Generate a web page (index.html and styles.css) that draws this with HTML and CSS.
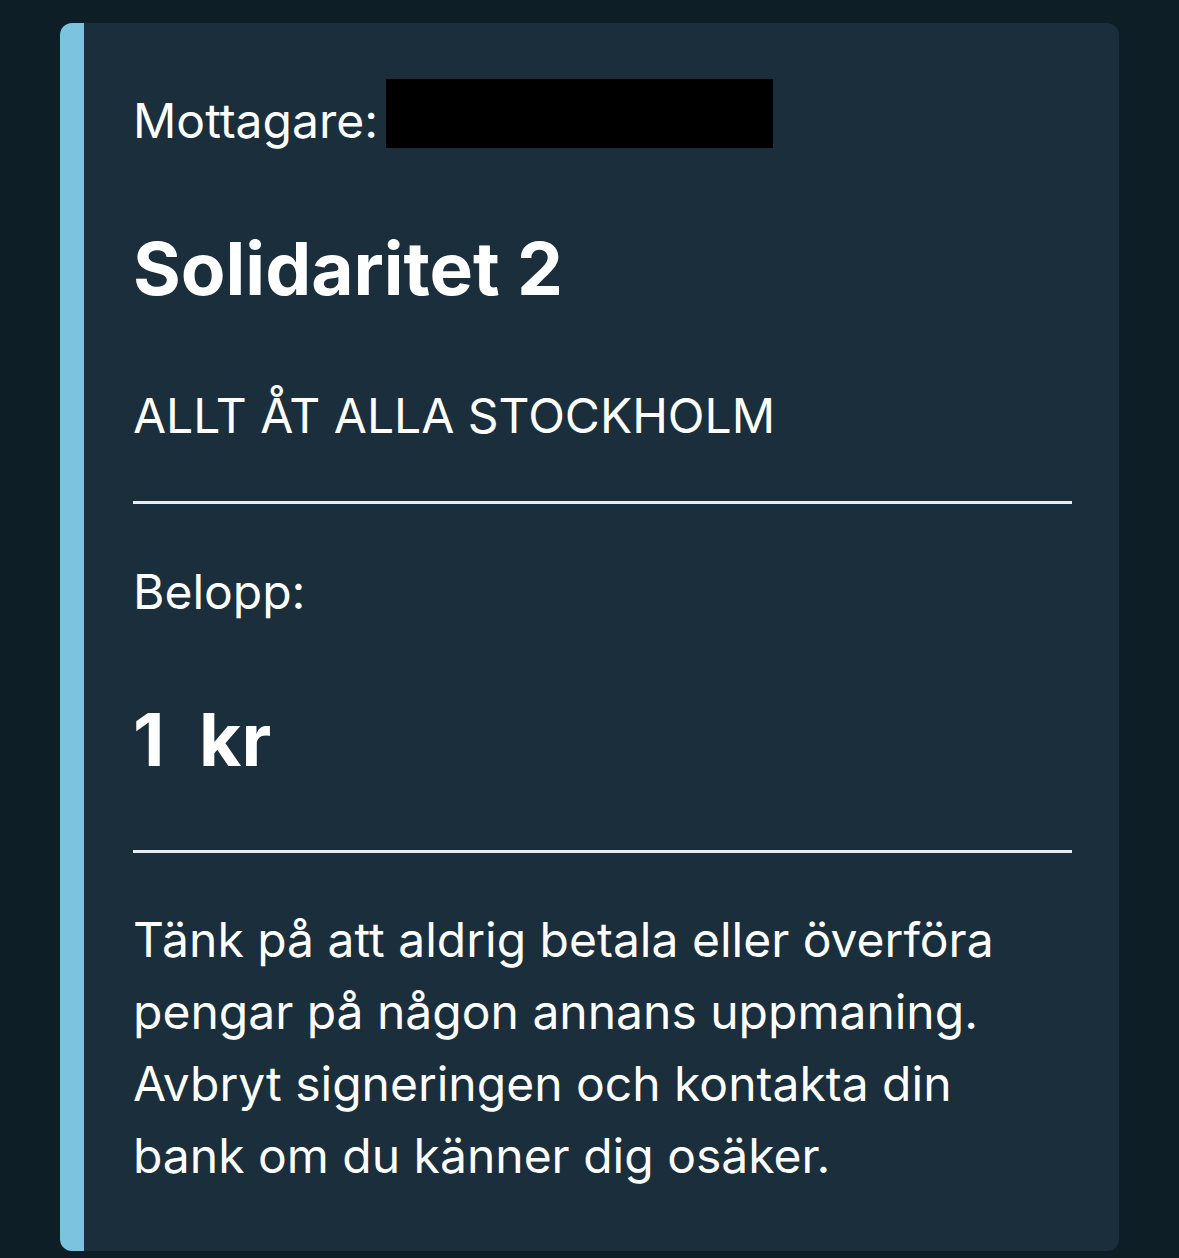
FILE: index.html
```html
<!DOCTYPE html>
<html lang="sv">
<head>
  <meta charset="UTF-8">
  <meta name="viewport" content="width=device-width, initial-scale=1.0">
  <title>Signera betalning</title>
  <link rel="stylesheet" href="styles.css">
</head>
<body>

  <div class="card">
    <div class="recipient">
      <span class="label">Mottagare:</span>
      <span class="redacted"></span>
    </div>

    <h1 class="title">Solidaritet 2</h1>
    <p class="org">ALLT ÅT ALLA STOCKHOLM</p>

    <hr class="divider">

    <p class="amount-label">Belopp:</p>
    <p class="amount">1&nbsp; kr</p>

    <hr class="divider divider-low">

    <!-- Varningstext -->
    <p class="warning">Tänk på att aldrig betala eller överföra pengar på någon annans uppmaning. Avbryt signeringen och kontakta din bank om du känner dig osäker.</p>
  </div>

</body>
</html>
```

FILE: styles.css
```css
body {
  margin: 0;
  background-color: #0e1e27;
  font-family: Inter, "Liberation Sans", Arial, sans-serif;
  color: #ffffff;
}

.card {
  margin: 23px 60px 0;
  padding: 56px 47px 59px 49px;
  background-color: #1a2e3b;
  border-left: 24px solid #7cc3df;
  border-radius: 12px;
}

.recipient {
  display: flex;
  align-items: flex-end;
  height: 69px;
}

.label {
  font-size: 48px;
  line-height: 48px;
  margin-bottom: 3px;
}

.redacted {
  width: 387px;
  height: 69px;
  margin-left: 8px;
  background-color: #000;
}

.title {
  margin: 84px 0 0;
  font-size: 73px;
  line-height: 73px;
  font-weight: 700;
}

.org {
  margin: 87px 0 0;
  font-size: 48px;
  line-height: 48px;
}

.divider {
  margin: 61px 0 0;
  height: 3px;
  border: none;
  background-color: #e6ecef;
}

.amount-label {
  margin: 64px 0 0;
  font-size: 48px;
  line-height: 48px;
}

.amount {
  margin: 87px 0 0;
  font-size: 73px;
  line-height: 73px;
  font-weight: 700;
}

.divider-low {
  margin-top: 74px;
}

.warning {
  margin: 51px 0 0;
  max-width: 900px;
  font-size: 48px;
  line-height: 72px;
}
```
